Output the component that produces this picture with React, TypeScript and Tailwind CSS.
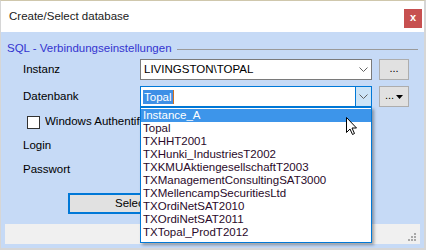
import React from "react";

const items = [
  "Instance_A",
  "Topal",
  "TXHHT2001",
  "TXHunki_IndustriesT2002",
  "TXKMUAktiengesellschaftT2003",
  "TXManagementConsultingSAT3000",
  "TXMellencampSecuritiesLtd",
  "TXOrdiNetSAT2010",
  "TXOrdiNetSAT2011",
  "TXTopal_ProdT2012",
];

function Chevron() {
  return (
    <svg width="9" height="5" viewBox="0 0 9 5">
      <path d="M0.5 0.5 L4.5 4.5 L8.5 0.5" fill="none" stroke="#606060" strokeWidth="1" />
    </svg>
  );
}

export default function App() {
  return (
    <div
      className="w-[426px] h-[250px] overflow-hidden relative flex flex-col border-t border-t-[#cfc7ac] border-l border-l-[#d6d6d6] border-r-2 border-r-[#d6d6d6] border-b-2 border-b-[#d6d6d6] text-[11.5px] text-black"
      style={{ fontFamily: '"Liberation Sans", Arial, sans-serif' }}
    >
      {/* Title bar */}
      <div className="h-[31px] bg-white flex items-center justify-between shrink-0">
        <span className="pl-[8px] text-[11.5px] text-[#1a1a1a]">Create/Select database</span>
        <div className="w-[18px] h-[19px] bg-[#c75050] mr-[2px] mt-[4px] flex items-center justify-center text-white font-bold text-[11px] leading-none pb-[2px]">
          x
        </div>
      </div>

      {/* Body */}
      <div className="flex-1 bg-[#c6daf6] flex flex-col">
        {/* group header */}
        <div className="mt-[10px] h-[14px] flex items-center pl-[6px] pr-[6px]">
          <span className="text-[#3434d0] text-[11.5px] whitespace-nowrap">SQL - Verbindungseinstellungen</span>
          <div className="flex-1 h-px bg-[#9a9a9a] ml-[5px]" />
        </div>

        {/* Instanz */}
        <div className="mt-[3px] h-[21px] flex items-center">
          <span className="w-[139px] pl-[22px]">Instanz</span>
          <div className="w-[232px] h-[21px] bg-white border border-[#7a7a7a] flex items-center pl-[3px]">
            <span className="flex-1">LIVINGSTON\TOPAL</span>
            <div className="w-[16px] flex justify-center">
              <Chevron />
            </div>
          </div>
          <div className="ml-[7px] w-[30px] h-[21px] bg-[#e1e1e1] border border-[#adadad] flex items-center justify-center text-[11px] leading-none pb-[3px]">
            ...
          </div>
        </div>

        {/* Datenbank */}
        <div className="mt-[6px] h-[21px] flex items-center">
          <span className="w-[139px] pl-[22px]">Datenbank</span>
          <div className="w-[232px] h-[21px] bg-white border border-[#0078d7] flex items-center">
            <div className="flex-1 flex items-center pl-[2px]">
              <span className="bg-[#3d8fe6] text-white px-[1px] leading-[14px]">Topal</span>
              <span className="w-px h-[14px] bg-[#d07020]" />
            </div>
            <div className="w-[16px] h-full bg-[#cce4f7] border-l border-[#0078d7] flex items-center justify-center">
              <Chevron />
            </div>
          </div>
          <div className="ml-[7px] w-[30px] h-[21px] bg-[#e1e1e1] border border-[#adadad] flex items-center justify-center gap-[2px]">
            <span className="text-[11px] leading-none pb-[3px]">...</span>
            <svg width="7" height="4" viewBox="0 0 7 4">
              <path d="M0 0 L7 0 L3.5 4 Z" fill="#000" />
            </svg>
          </div>
        </div>

        {/* Checkbox */}
        <div className="mt-[7px] h-[16px] flex items-center pl-[26px]">
          <div className="w-[13px] h-[13px] bg-white border border-[#333] shrink-0" />
          <span className="ml-[5px] w-[95px] overflow-hidden whitespace-nowrap">Windows Authentifizierung</span>
        </div>

        {/* Login */}
        <div className="mt-[8px] h-[16px] flex items-center pl-[22px]">Login</div>
        {/* Passwort */}
        <div className="mt-[8px] h-[16px] flex items-center pl-[22px]">Passwort</div>

        {/* Select button */}
        <div className="mt-[15px] h-[21px] flex">
          <div className="ml-[67px] w-[200px] h-[21px] bg-[#e1e1e1] border-2 border-[#0078d7] flex items-center pl-[45px]">
            Select
          </div>
        </div>

        {/* Status bar */}
        <div className="mt-[10px] mx-[4px] h-[20px] bg-[#f0f0f0] relative">
          <svg className="absolute right-[3px] bottom-[2px]" width="10" height="10" viewBox="0 0 10 10">
            <rect x="7" y="1" width="2" height="2" fill="#a8a8a8" />
            <rect x="4" y="4" width="2" height="2" fill="#a8a8a8" />
            <rect x="7" y="4" width="2" height="2" fill="#a8a8a8" />
            <rect x="1" y="7" width="2" height="2" fill="#a8a8a8" />
            <rect x="4" y="7" width="2" height="2" fill="#a8a8a8" />
            <rect x="7" y="7" width="2" height="2" fill="#a8a8a8" />
          </svg>
        </div>
      </div>

      {/* Dropdown list overlay */}
      <div className="absolute left-[139px] top-[106px] w-[232px] bg-white border border-[#0078d7] shadow-[2px_2px_3px_rgba(0,0,0,0.35)] pt-px pb-[3px]">
        {items.map((it, i) => (
          <div
            key={it}
            className={
              "h-[13px] leading-[13px] pl-[2px] whitespace-nowrap " +
              (i === 0 ? "bg-[#3d95ea] text-white" : "text-[#2a0a2a]")
            }
          >
            {it}
          </div>
        ))}
      </div>

      {/* Mouse cursor */}
      <svg className="absolute left-[345px] top-[116px]" width="12" height="19" viewBox="0 0 12 19">
        <path
          d="M0.5 0.5 L0.5 15.5 L4 12 L6.5 17.5 L8.5 16.5 L6 11 L10.5 11 Z"
          fill="#fff"
          stroke="#000"
          strokeWidth="1"
          strokeLinejoin="round"
        />
      </svg>
    </div>
  );
}
